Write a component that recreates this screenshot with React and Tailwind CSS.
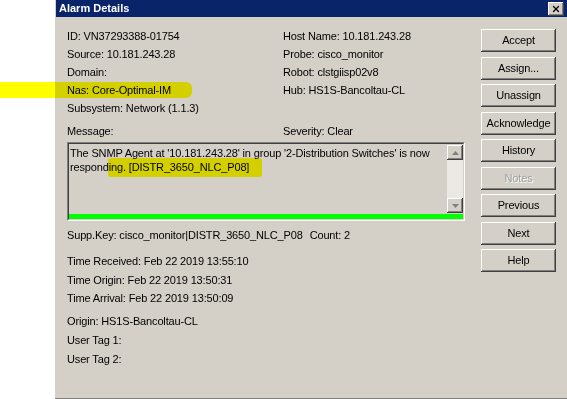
import { X } from "lucide-react";

const btn3d =
  "shadow-[inset_-1px_-1px_#404040,inset_1px_1px_#ffffff,inset_-2px_-2px_#808080,inset_2px_2px_#d4d0c8]";

const buttons = [
  { label: "Accept" },
  { label: "Assign..." },
  { label: "Unassign" },
  { label: "Acknowledge" },
  { label: "History" },
  { label: "Notes", disabled: true },
  { label: "Previous" },
  { label: "Next" },
  { label: "Help" },
];

const Row = ({ left, right }) => (
  <div className="flex h-[18px] items-center">
    <div className="w-[216px] shrink-0">{left}</div>
    <div>{right}</div>
  </div>
);

const App = () => {
  return (
    <div
      className="relative flex w-[567px] h-[399px] overflow-hidden bg-white text-[11px] tracking-[-0.15px] text-black"
      style={{ fontFamily: '"Liberation Sans", Arial, sans-serif' }}
    >
      <div className="w-[55px] shrink-0" />

      <div className="flex flex-1 flex-col bg-[#d4d0c8] border-b border-[#808080]">
        {/* title bar */}
        <div className="ml-[1px] flex h-[17px] items-center justify-between bg-[#0a246a] pl-[3px] pr-[3px]">
          <span className="font-bold text-white text-[11px] tracking-normal">Alarm Details</span>
          <div className={`flex h-[14px] w-[16px] items-center justify-center bg-[#d4d0c8] ${btn3d}`}>
            <X size={10} strokeWidth={3} className="text-black" />
          </div>
        </div>

        <div className="flex flex-1">
          {/* main fields */}
          <div className="flex-1 pl-[12px] pt-[10px]">
            <Row left="ID: VN37293388-01754" right="Host Name: 10.181.243.28" />
            <Row left="Source: 10.181.243.28" right="Probe: cisco_monitor" />
            <Row left="Domain:" right="Robot: clstgiisp02v8" />
            <Row left="Nas: Core-Optimal-IM" right="Hub: HS1S-Bancoltau-CL" />
            <Row left="Subsystem: Network (1.1.3)" right="" />
            <div className="mt-[5px]">
              <Row left="Message:" right="Severity: Clear" />
            </div>

            {/* message box */}
            <div className="mt-[2px] w-[398px] border border-t-[#808080] border-l-[#808080] border-b-white border-r-white">
              <div className="border border-t-[#404040] border-l-[#404040] border-b-[#d4d0c8] border-r-[#d4d0c8]">
                <div className="flex h-[70px]">
                  <div className="flex-1 pl-[1px] pt-[2px] pr-[4px] leading-[14px]">
                    The SNMP Agent at '10.181.243.28' in group '2-Distribution Switches' is now responding. [DISTR_3650_NLC_P08]
                  </div>
                  <div className="flex w-[16px] flex-col pt-[1px] pb-[1px]">
                    <div className={`flex h-[15px] items-center justify-center bg-[#d4d0c8] ${btn3d}`}>
                      <svg width="7" height="4" viewBox="0 0 7 4">
                        <path d="M3.5 0 L7 4 L0 4 Z" fill="#808080" />
                      </svg>
                    </div>
                    <div className="flex-1 bg-[#ebe9e4]" />
                    <div className={`flex h-[15px] items-center justify-center bg-[#d4d0c8] ${btn3d}`}>
                      <svg width="7" height="4" viewBox="0 0 7 4">
                        <path d="M0 0 L7 0 L3.5 4 Z" fill="#808080" />
                      </svg>
                    </div>
                  </div>
                </div>
                <div className="h-[5px] bg-[#00ff00]" />
              </div>
            </div>

            <div className="mt-[5px] flex h-[18px] items-center gap-[7px]">
              <span>Supp.Key: cisco_monitor|DISTR_3650_NLC_P08</span>
              <span>Count: 2</span>
            </div>

            <div className="mt-[8px] leading-[18.5px]">
              <div>Time Received: Feb 22 2019 13:55:10</div>
              <div>Time Origin: Feb 22 2019 13:50:31</div>
              <div>Time Arrival: Feb 22 2019 13:50:09</div>
            </div>

            <div className="mt-[4px] leading-[19px]">
              <div>Origin: HS1S-Bancoltau-CL</div>
              <div>User Tag 1:</div>
              <div>User Tag 2:</div>
            </div>
          </div>

          {/* buttons */}
          <div className="flex w-[86px] shrink-0 flex-col gap-[4.5px] pt-[12px] pr-[11px]">
            {buttons.map((b) => (
              <div
                key={b.label}
                className={`flex h-[23px] w-[75px] items-center justify-center bg-[#d4d0c8] ${btn3d} ${
                  b.disabled ? "text-[#a0a0a0] [text-shadow:1px_1px_#ffffff]" : ""
                }`}
              >
                {b.label}
              </div>
            ))}
          </div>
        </div>
      </div>

      {/* highlighter marks */}
      <div className="pointer-events-none absolute left-0 top-[82px] h-[16px] w-[192px] rounded-r-[6px] bg-[#ffff00] mix-blend-multiply" />
      <div className="pointer-events-none absolute left-[108px] top-[158px] h-[19px] w-[154px] rounded-[3px] bg-[#ffff00] mix-blend-multiply" />
    </div>
  );
};

export default App;
